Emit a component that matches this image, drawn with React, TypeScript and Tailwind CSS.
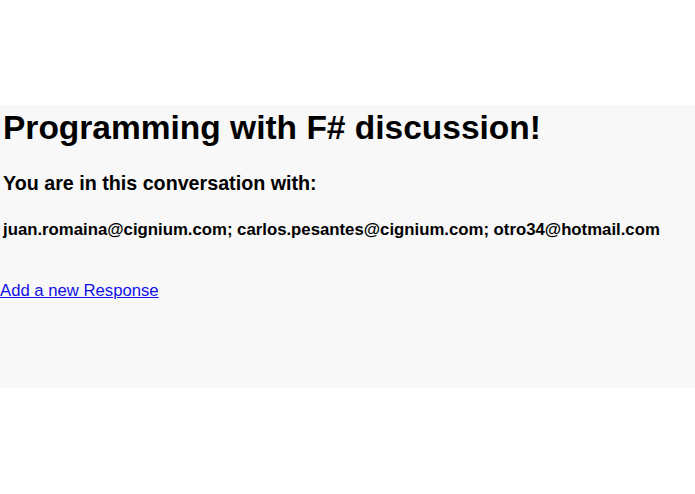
import React from 'react';

const participants = [
  'juan.romaina@cignium.com',
  'carlos.pesantes@cignium.com',
  'otro34@hotmail.com',
];

export default function App() {
  return (
    <div className="min-h-[494px] bg-white font-['Liberation_Sans',Arial,sans-serif] text-black">
      <div className="h-[105px]" />
      <div className="h-[283px] bg-[#f8f8f8]">
        <h1 className="pl-[3px] pt-[1px] text-[33.5px] font-bold leading-[44px]">
          Programming with F# discussion!
        </h1>
        <h3 className="mt-[20px] pl-[3px] text-[19.7px] font-bold leading-[26px]">
          You are in this conversation with:
        </h3>
        <p className="mt-[24px] pl-[3px] text-[16.75px] font-bold leading-[20px]">
          {participants.join('; ')}
        </p>
        <a href="#" className="mt-[41px] block w-fit text-[16.7px] leading-[20px] text-[#1010e8] underline">
          Add a new Response
        </a>
      </div>
    </div>
  );
}
